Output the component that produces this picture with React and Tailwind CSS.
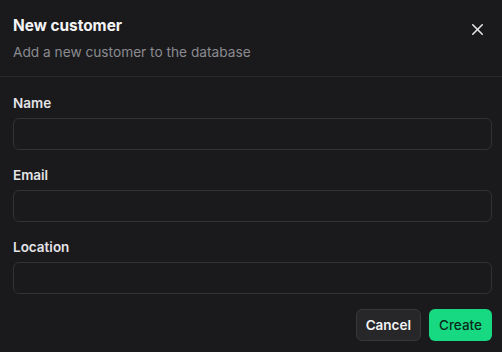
import React from 'react';
import { X } from 'lucide-react';

export default function App() {
  const fields = ['Name', 'Email', 'Location'];

  return (
    <div className="w-[502px] h-[352px] bg-[#1a1a1d] overflow-hidden" style={{ fontFamily: 'Inter, "Noto Sans", sans-serif' }}>
      {/* Header */}
      <div className="flex items-start justify-between pl-[13px] pr-[15px] pt-[16px] h-[77px] border-b border-[#27272a]">
        <div>
          <h2 className="text-[15.4px] leading-[20px] font-bold text-[#f4f4f5]">New customer</h2>
          <p className="mt-[7px] text-[13.7px] leading-[18px] text-[#8b8b90]">Add a new customer to the database</p>
        </div>
        <button className="mt-[4px] text-[#e4e4e7]">
          <X className="w-[19px] h-[19px]" strokeWidth={2} />
        </button>
      </div>

      {/* Form */}
      <div className="pl-[13px] pr-[10px] pt-[17px] flex flex-col gap-[16px]">
        {fields.map((label) => (
          <div key={label} className="flex flex-col gap-[6px]">
            <label className="text-[13.5px] leading-[18px] font-semibold text-[#e4e4e7]">{label}</label>
            <input className="h-[32px] w-full rounded-[6px] border border-[#323236] bg-[#1a1a1d] px-3 text-[14px] text-white outline-none" />
          </div>
        ))}
      </div>

      {/* Footer */}
      <div className="flex justify-end gap-[8px] pr-[10px] pt-[15px]">
        <button className="h-[32px] px-[9px] rounded-[6px] bg-[#27272a] border border-[#38383c] text-[13.5px] font-semibold text-[#f4f4f5]">Cancel</button>
        <button className="h-[32px] px-[10px] rounded-[6px] bg-[#17d982] text-[13.5px] font-medium text-[#0b2a1a]">Create</button>
      </div>
    </div>
  );
}
